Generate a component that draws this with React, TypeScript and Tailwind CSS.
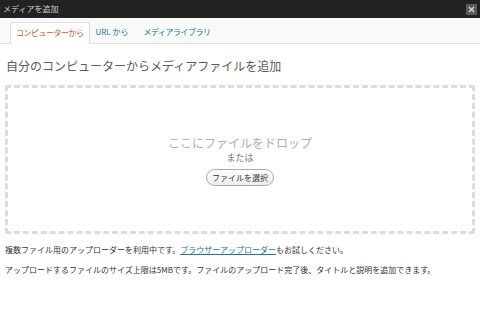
import React from "react";

const jp = { fontFamily: '"Noto Sans CJK JP", "Noto Sans", sans-serif' };

export default function App() {
  return (
    <div className="w-[480px] h-[330px] bg-white overflow-hidden flex flex-col" style={jp}>
      <div className="h-[18px] bg-[#222222] flex items-center justify-between pl-[3px] pr-[3px]">
        <span className="text-[8px] text-[#cfcfcf] leading-none">メディアを追加</span>
        <div className="w-[11px] h-[11px] bg-[#5a5a5a] flex items-center justify-center">
          <svg width="7" height="7" viewBox="0 0 7 7">
            <path d="M1 1 L6 6 M6 1 L1 6" stroke="#d8d8d8" strokeWidth="1.4" />
          </svg>
        </div>
      </div>
      <div className="h-[26px] bg-[#f9f9f9] border-b border-[#dfdfdf] flex items-end pl-[10px] gap-[6px] tracking-[-0.5px]">
        <div className="h-[22px] px-[5px] bg-white border border-b-0 border-[#dfdfdf] rounded-t-[3px] flex items-center text-[8px] text-[#d54e21] -mb-px pb-px">
          コンピューターから
        </div>
        <div className="h-[22px] flex items-center text-[8px] text-[#21759b] pb-px tracking-normal">URL から</div>
        <div className="h-[22px] pl-[9px] flex items-center text-[8px] text-[#21759b] pb-px">メディアライブラリ</div>
      </div>
      <div className="pl-[6px] pt-[15px] text-[12px] leading-[14px] text-[#5a5a5a]">
        自分のコンピューターからメディアファイルを追加
      </div>
      <div className="mx-[5px] mt-[12px] h-[149px] border-[3px] border-dashed border-[#dcdcdc] flex flex-col items-center pt-[48px]">
        <div className="text-[12px] leading-[14px] text-[#b0b0b0]">ここにファイルをドロップ</div>
        <div className="text-[9px] leading-[11px] text-[#7a7a7a] mt-[2px]">または</div>
        <div className="mt-[6px] h-[17px] px-[5px] rounded-full border border-[#aaaaaa] bg-gradient-to-b from-white to-[#ededed] flex items-center text-[8px] text-[#333]">
          ファイルを選択
        </div>
      </div>
      <div className="pl-[5px] mt-[11px] text-[8px] leading-[10px] text-[#333]">
        複数ファイル用のアップローダーを利用中です。
        <span className="text-[#21759b] underline">ブラウザーアップローダー</span>
        もお試しください。
      </div>
      <div className="pl-[5px] mt-[10px] text-[8px] leading-[10px] text-[#333]">
        アップロードするファイルのサイズ上限は5MBです。ファイルのアップロード完了後、タイトルと説明を追加できます。
      </div>
    </div>
  );
}
